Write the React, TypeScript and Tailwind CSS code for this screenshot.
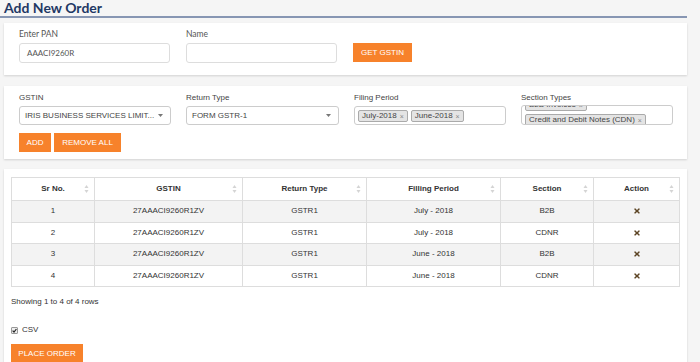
import { FaTimes } from "react-icons/fa";

const lato = { fontFamily: "Lato, 'Liberation Sans', sans-serif" };

const rows = [
  { sr: 1, gstin: "27AAACI9260R1ZV", type: "GSTR1", period: "July - 2018", section: "B2B" },
  { sr: 2, gstin: "27AAACI9260R1ZV", type: "GSTR1", period: "July - 2018", section: "CDNR" },
  { sr: 3, gstin: "27AAACI9260R1ZV", type: "GSTR1", period: "June - 2018", section: "B2B" },
  { sr: 4, gstin: "27AAACI9260R1ZV", type: "GSTR1", period: "June - 2018", section: "CDNR" },
];

const columns = [
  { label: "Sr No.", w: "w-[83px]" },
  { label: "GSTIN", w: "w-[148px]" },
  { label: "Return Type", w: "w-[124px]" },
  { label: "Filling Period", w: "w-[134px]" },
  { label: "Section", w: "w-[93px]" },
  { label: "Action", w: "" },
];

function SortIcon() {
  return (
    <svg width="5" height="9" viewBox="0 0 5 9" className="absolute right-[5px] top-1/2 -translate-y-1/2">
      <path d="M2.5 0.5 L4.5 3.5 L0.5 3.5 Z" fill="#d4d4d4" />
      <path d="M2.5 8.5 L4.5 5.5 L0.5 5.5 Z" fill="#d4d4d4" />
    </svg>
  );
}

function Caret() {
  return (
    <svg width="5" height="3" viewBox="0 0 5 3" className="absolute right-[7px] top-[7px]">
      <path d="M0 0 L5 0 L2.5 3 Z" fill="#777" />
    </svg>
  );
}

function Tag({ text }: { text: string }) {
  return (
    <span className="inline-flex items-center h-[12px] px-[3px] mr-[3px] mt-[3px] bg-[#e4e4e4] border border-[#aaa] rounded-[2px] text-[8px] text-[#444] leading-none whitespace-nowrap">
      {text}
      <span className="ml-[3px] text-[#888] text-[7px]">×</span>
    </span>
  );
}

function OrangeButton({ children, className = "" }: { children: React.ReactNode; className?: string }) {
  return (
    <button className={`h-[19px] px-[6px] bg-[#f7822b] text-white text-[8px] leading-none ${className}`}>
      {children}
    </button>
  );
}

export default function App() {
  return (
    <div
      className="w-[700px] h-[362px] overflow-hidden bg-[#f5f5f5] text-[#333]"
      style={{ fontFamily: "'Liberation Sans', Arial, sans-serif" }}
    >
      <div className="pl-[4px] pr-[13px]">
        <h1 className="text-[14px] font-bold text-[#1f3864] leading-[16px]" style={lato}>
          Add New Order
        </h1>
        <div className="h-[2px] bg-[#8796b3] -ml-[4px]" />

        {/* PAN card */}
        <div className="mt-[5px] bg-white shadow-[0_1px_2px_rgba(0,0,0,0.15)] pt-[6px] pb-[12px] px-[15px]">
          <div className="grid grid-cols-[151px_151px_151px] gap-x-[16px] items-end">
            <div>
              <div className="text-[8.5px] text-[#555] leading-[11px] mb-[3px]" style={lato}>Enter PAN</div>
              <div className="h-[20px] border border-[#ddd] rounded-[3px] flex items-center px-[7px] text-[8px] text-[#555]" style={lato}>
                AAACI9260R
              </div>
            </div>
            <div>
              <div className="text-[8.5px] text-[#555] leading-[11px] mb-[3px]" style={lato}>Name</div>
              <div className="h-[20px] border border-[#ddd] rounded-[3px]" />
            </div>
            <div className="pb-[1px]">
              <OrangeButton className="w-[59px]">GET GSTIN</OrangeButton>
            </div>
          </div>
        </div>

        {/* Selection card */}
        <div className="mt-[11px] bg-white shadow-[0_1px_2px_rgba(0,0,0,0.15)] pt-[6px] pb-[7px] px-[15px]">
          <div className="grid grid-cols-[152px_153px_152px_152px] gap-x-[15px]">
            <div>
              <div className="text-[8px] text-[#444] leading-[12px] mb-[2px]">GSTIN</div>
              <div className="relative h-[19px] border border-[#ccc] rounded-[3px] flex items-center px-[5px] text-[8px] text-[#444]">
                IRIS BUSINESS SERVICES LIMIT...
                <Caret />
              </div>
            </div>
            <div>
              <div className="text-[8px] text-[#444] leading-[12px] mb-[2px]">Return Type</div>
              <div className="relative h-[19px] border border-[#ccc] rounded-[3px] flex items-center px-[5px] text-[8px] text-[#444]">
                FORM GSTR-1
                <Caret />
              </div>
            </div>
            <div>
              <div className="text-[8px] text-[#444] leading-[12px] mb-[2px]">Filing Period</div>
              <div className="h-[19px] border border-[#ccc] rounded-[3px] pl-[3px] flex items-start">
                <Tag text="July-2018" />
                <Tag text="June-2018" />
              </div>
            </div>
            <div>
              <div className="text-[8px] text-[#444] leading-[12px] mb-[1px]">Section Types</div>
              <div className="h-[20px] border border-[#ccc] rounded-[3px] pl-[3px] overflow-hidden">
                <div className="-mt-[10px] flex flex-col items-start">
                  <Tag text="B2B Invoices" />
                  <Tag text="Credit and Debit Notes (CDN)" />
                </div>
              </div>
            </div>
          </div>
          <div className="flex gap-[3px] mt-[8px]">
            <OrangeButton className="w-[32px] px-0">ADD</OrangeButton>
            <OrangeButton className="w-[67px] px-0">REMOVE ALL</OrangeButton>
          </div>
        </div>

        {/* Table card */}
        <div className="mt-[10px] bg-white shadow-[0_1px_2px_rgba(0,0,0,0.15)] pt-[8px] px-[7px] h-[200px]">
          <table className="w-full border-collapse border border-[#ddd] text-[8px] text-[#333]">
            <thead>
              <tr className="h-[23px]">
                {columns.map((c) => (
                  <th key={c.label} className={`relative border border-[#ddd] font-bold text-center ${c.w}`}>
                    {c.label}
                    <SortIcon />
                  </th>
                ))}
              </tr>
            </thead>
            <tbody>
              {rows.map((r, i) => (
                <tr key={r.sr} className={`h-[21.5px] ${i % 2 === 0 ? "bg-[#f3f3f3]" : "bg-white"}`}>
                  <td className="border border-[#ddd] text-center">{r.sr}</td>
                  <td className="border border-[#ddd] text-center">{r.gstin}</td>
                  <td className="border border-[#ddd] text-center">{r.type}</td>
                  <td className="border border-[#ddd] text-center">{r.period}</td>
                  <td className="border border-[#ddd] text-center">{r.section}</td>
                  <td className="border border-[#ddd] text-center">
                    <FaTimes className="inline-block text-[#5c4424] w-[8px] h-[8px]" />
                  </td>
                </tr>
              ))}
            </tbody>
          </table>
          <div className="mt-[10px] text-[8px] text-[#333] leading-[10px]">Showing 1 to 4 of 4 rows</div>
          <label className="mt-[17px] flex items-center gap-[4px] text-[8px] text-[#333]">
            <span className="w-[7px] h-[7px] border border-[#999] rounded-[1px] bg-[#eee] flex items-center justify-center">
              <svg width="5" height="5" viewBox="0 0 5 5">
                <path d="M0.6 2.6 L2 4 L4.4 1" stroke="#222" strokeWidth="1.2" fill="none" />
              </svg>
            </span>
            CSV
          </label>
          <button className="mt-[8px] h-[20px] w-[72px] bg-[#f7822b] text-white text-[8px] leading-none">
            PLACE ORDER
          </button>
        </div>
      </div>
    </div>
  );
}
